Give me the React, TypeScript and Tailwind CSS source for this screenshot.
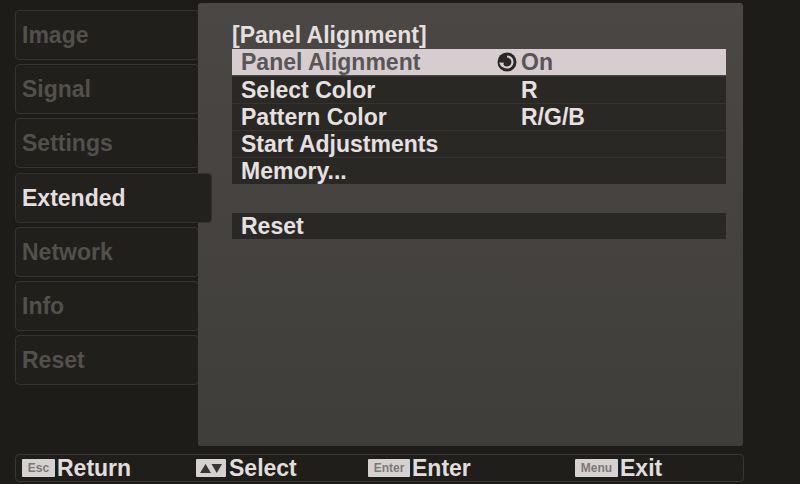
import React from "react";

const font = { fontFamily: '"Liberation Sans", Arial, sans-serif' };

function TabItem({ label, active }: { label: string; active?: boolean }) {
  if (active) {
    return (
      <div className="relative z-10 flex h-[50px] w-[197px] items-center rounded-sm border border-[#33312d] bg-[#22211e] pl-[6px] text-[23px] font-bold text-[#e4dfdf]">
        {label}
      </div>
    );
  }
  return (
    <div className="flex h-[50px] w-[184px] items-center rounded-sm border border-[#36342f] bg-[#201f1c] pl-[6px] text-[23px] font-bold text-[#52504b]">
      {label}
    </div>
  );
}

function OnIcon() {
  return (
    <svg width="20" height="20" viewBox="0 0 20 20" className="mr-[4px]">
      <circle cx="10" cy="10" r="9.5" fill="#2b2727" />
      <path d="M10 4.5 A5.5 5.5 0 1 1 4.8 12" fill="none" stroke="#d8d0d3" strokeWidth="2.2" />
      <path d="M2.2 10.5 L7.2 10.8 L4.2 14.8 Z" fill="#d8d0d3" />
    </svg>
  );
}

function Row({ label, value, highlight }: { label: string; value?: string; highlight?: boolean }) {
  return (
    <div
      className={
        highlight
          ? "flex h-[26px] items-center bg-[#d6cdd1] text-[#5a5556]"
          : "flex h-[27px] items-center border-t border-[#35332f] bg-[#2a2825] text-[#e6e0e0]"
      }
    >
      <div className="w-[265px] pl-[9px] text-[23px] font-bold">{label}</div>
      {highlight ? (
        <div className="flex items-center text-[23px] font-bold">
          <OnIcon />
          {value}
        </div>
      ) : (
        <div className="pl-[24px] text-[23px] font-bold">{value}</div>
      )}
    </div>
  );
}

function Badge({ children, w }: { children: React.ReactNode; w: string }) {
  return (
    <div className={`flex h-[18px] ${w} items-center justify-center rounded-[1px] bg-[#d6d1d1] text-[12px] leading-none text-[#7d7878]`}>
      {children}
    </div>
  );
}

export default function App() {
  return (
    <div className="flex h-[484px] w-[800px] flex-col overflow-hidden bg-[#1d1c19]" style={font}>
      <div className="flex h-[451px]">
        <div className="flex w-[198px] flex-col gap-[4px] pl-[15px] pt-[10px]">
          <TabItem label="Image" />
          <TabItem label="Signal" />
          <TabItem label="Settings" />
          <div className="mt-[1px]">
            <TabItem label="Extended" active />
          </div>
          <TabItem label="Network" />
          <TabItem label="Info" />
          <TabItem label="Reset" />
        </div>
        <div className="mt-[3px] flex h-[443px] w-[545px] flex-col rounded-[3px] bg-gradient-to-b from-[#4a4744] to-[#403e3b] pl-[34px] pr-[17px] pt-[20px]">
          <div className="h-[26px] text-[23px] font-bold leading-[24px] text-[#e4dfdf]">[Panel Alignment]</div>
          <div className="flex flex-col">
            <Row label="Panel Alignment" value="On" highlight />
            <div className="h-[1px]" />
            <Row label="Select Color" value="R" />
            <Row label="Pattern Color" value="R/G/B" />
            <Row label="Start Adjustments" />
            <Row label="Memory..." />
          </div>
          <div className="h-[29px]" />
          <div className="flex h-[26px] items-center bg-[#2a2825] pl-[9px] text-[23px] font-bold text-[#e6e0e0]">Reset</div>
        </div>
      </div>
      <div className="ml-[15px] mt-[3px] flex h-[28px] w-[729px] items-center rounded-sm border border-[#3a3834] bg-[#1f1e1b] pl-[6px] text-[23px] font-bold text-[#e2dddd]">
        <div className="flex w-[174px] items-center gap-[2px]">
          <Badge w="w-[33px]">Esc</Badge>
          <span>Return</span>
        </div>
        <div className="flex w-[172px] items-center gap-[3px]">
          <Badge w="w-[30px]">
            <svg width="24" height="12" viewBox="0 0 24 12">
              <path d="M1 11 L6.5 2 L12 11 Z" fill="#3a3636" />
              <path d="M12.5 2 L23 2 L17.75 11 Z" fill="#3a3636" />
            </svg>
          </Badge>
          <span>Select</span>
        </div>
        <div className="flex w-[207px] items-center gap-[2px]">
          <Badge w="w-[42px]">Enter</Badge>
          <span>Enter</span>
        </div>
        <div className="flex items-center gap-[2px]">
          <Badge w="w-[43px]">Menu</Badge>
          <span>Exit</span>
        </div>
      </div>
    </div>
  );
}
